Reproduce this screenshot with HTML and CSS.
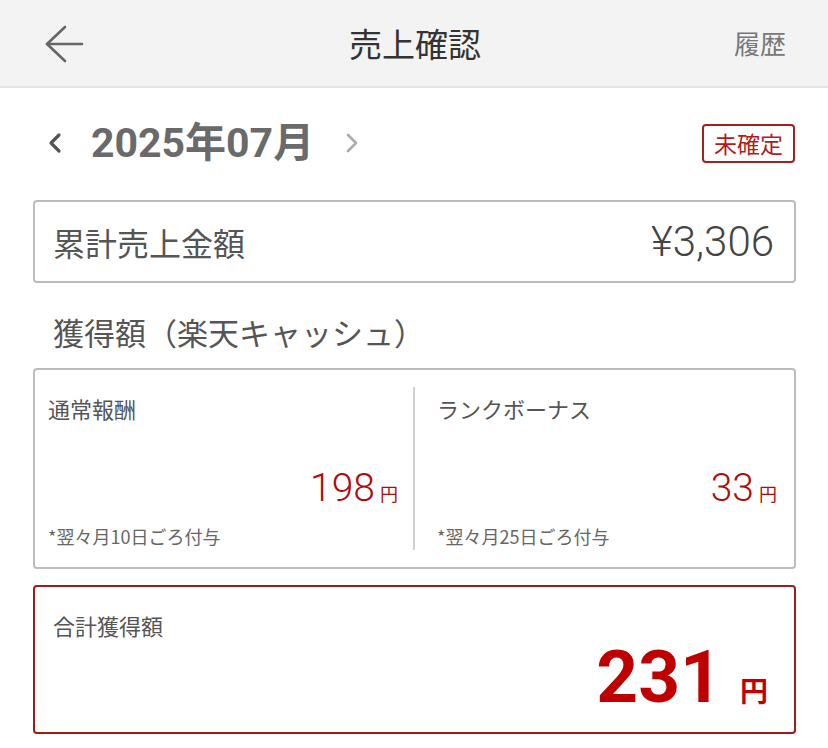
FILE: index.html
```html
<!DOCTYPE html>
<html lang="ja">
<head>
<meta charset="utf-8">
<title>売上確認</title>
<link rel="stylesheet" href="styles.css">
</head>
<body>
<header class="topbar">
  <div class="topbar-left">
    <svg class="back-icon" width="40" height="40" viewBox="0 0 40 40">
      <polyline points="21,3 3,20 21,37" fill="none" stroke="#666" stroke-width="2.6" stroke-linecap="round" stroke-linejoin="round"/>
      <line x1="3" y1="20" x2="38" y2="20" stroke="#666" stroke-width="2.6" stroke-linecap="round"/>
    </svg>
  </div>
  <h1 class="topbar-title">売上確認</h1>
  <div class="topbar-right">履歴</div>
</header>

<main class="content">
  <div class="month-row">
    <div class="month-nav">
      <svg class="chev chev-prev" width="16" height="22" viewBox="0 0 16 22">
        <polyline points="12,3 4,11 12,19" fill="none" stroke="#555" stroke-width="3.2" stroke-linecap="round" stroke-linejoin="round"/>
      </svg>
      <span class="month-label">2025年07月</span>
      <svg class="chev chev-next" width="16" height="22" viewBox="0 0 16 22">
        <polyline points="4,3 12,11 4,19" fill="none" stroke="#aaa" stroke-width="2.6" stroke-linecap="round" stroke-linejoin="round"/>
      </svg>
    </div>
    <span class="badge">未確定</span>
  </div>

  <div class="total-sales">
    <span class="total-sales-label">累計売上金額</span>
    <span class="total-sales-value">¥3,306</span>
  </div>

  <h2 class="section-title">獲得額（楽天キャッシュ）</h2>

  <div class="earn-grid">
    <div class="earn-col">
      <div class="earn-label">通常報酬</div>
      <div class="earn-value"><span class="num">198</span><span class="yen">円</span></div>
      <div class="earn-note">*翌々月10日ごろ付与</div>
    </div>
    <div class="earn-col earn-col-right">
      <div class="earn-label">ランクボーナス</div>
      <div class="earn-value"><span class="num">33</span><span class="yen">円</span></div>
      <div class="earn-note">*翌々月25日ごろ付与</div>
    </div>
  </div>

  <div class="grand-total">
    <div class="grand-label">合計獲得額</div>
    <div class="grand-value"><span class="num">231</span><span class="yen">円</span></div>
  </div>
</main>
</body>
</html>
```

FILE: styles.css
```css
* {
  box-sizing: border-box;
}

html, body {
  margin: 0;
  padding: 0;
  background: #ffffff;
}

body {
  font-family: "Noto Sans CJK JP", "Noto Sans", sans-serif;
  color: #555;
  width: 828px;
}

.topbar {
  height: 88px;
  background: #f3f3f3;
  border-bottom: 2px solid #e4e4e4;
  display: grid;
  grid-template-columns: 1fr auto 1fr;
  align-items: center;
  padding: 0 42px 0 44px;
}

.topbar-left {
  display: flex;
  align-items: center;
}

.back-icon {
  display: block;
  margin-top: 1px;
}

.topbar-title {
  margin: 0;
  font-size: 33px;
  font-weight: 400;
  color: #333;
  line-height: 40px;
  text-align: center;
}

.topbar-right {
  justify-self: end;
  font-size: 26px;
  color: #777;
  line-height: 36px;
}

.content {
  padding: 35px 32px 0 33px;
}

.month-row {
  height: 40px;
  display: flex;
  align-items: center;
  justify-content: space-between;
}

.month-nav {
  display: flex;
  align-items: center;
}

.chev {
  display: block;
}

.chev-prev {
  margin-left: 14px;
}

.month-label {
  margin-left: 28px;
  font-family: "Roboto", "Noto Sans CJK JP", sans-serif;
  font-weight: 700;
  font-size: 41px;
  line-height: 40px;
  color: #6a6a6a;
}

.chev-next {
  margin-left: 30px;
}

.badge {
  margin-right: 1px;
  border: 2px solid #a8201d;
  border-radius: 4px;
  color: #b01c1c;
  font-size: 23px;
  line-height: 35px;
  padding: 0 10px;
}

.total-sales {
  margin-top: 37px;
  height: 83px;
  border: 2px solid #bcbcbc;
  border-radius: 4px;
  display: flex;
  align-items: center;
  justify-content: space-between;
  padding: 0 20px 0 18px;
}

.total-sales-label {
  font-size: 32px;
  color: #555;
  line-height: 40px;
}

.total-sales-value {
  font-family: "Roboto", sans-serif;
  font-weight: 300;
  font-size: 42px;
  color: #444;
  line-height: 40px;
}

.section-title {
  margin: 29px 0 0 20px;
  font-size: 31px;
  font-weight: 400;
  line-height: 40px;
  color: #555;
}

.earn-grid {
  margin-top: 16px;
  border: 2px solid #bcbcbc;
  border-radius: 4px;
  display: grid;
  grid-template-columns: 378px 1fr;
  padding: 17px 0;
}

.earn-col {
  display: flex;
  flex-direction: column;
  padding: 6px 15px 0 13px;
}

.earn-col-right {
  border-left: 2px solid #d0d0d0;
  padding: 6px 17px 0 22px;
}

.earn-label {
  font-size: 22px;
  line-height: 30px;
  color: #555;
}

.earn-value {
  margin-top: 46px;
  text-align: right;
  color: #b00c0c;
  line-height: 38px;
}

.earn-value .num {
  font-family: "Roboto", sans-serif;
  font-weight: 300;
  font-size: 39px;
}

.earn-value .yen {
  font-size: 18px;
  margin-left: 5px;
}

.earn-note {
  margin-top: 10px;
  font-size: 18px;
  line-height: 27px;
  color: #666;
}

.grand-total {
  margin-top: 16px;
  height: 149px;
  border: 2px solid #a01a1a;
  border-radius: 4px;
  padding: 23px 26px 0 18px;
}

.grand-label {
  font-size: 22px;
  line-height: 30px;
  color: #555;
}

.grand-value {
  margin-top: 1px;
  text-align: right;
  color: #bf0000;
  line-height: 72px;
}

.grand-value .num {
  font-family: "Roboto", sans-serif;
  font-weight: 700;
  font-size: 73px;
}

.grand-value .yen {
  font-size: 28px;
  font-weight: 700;
  margin-left: 18px;
}
```
